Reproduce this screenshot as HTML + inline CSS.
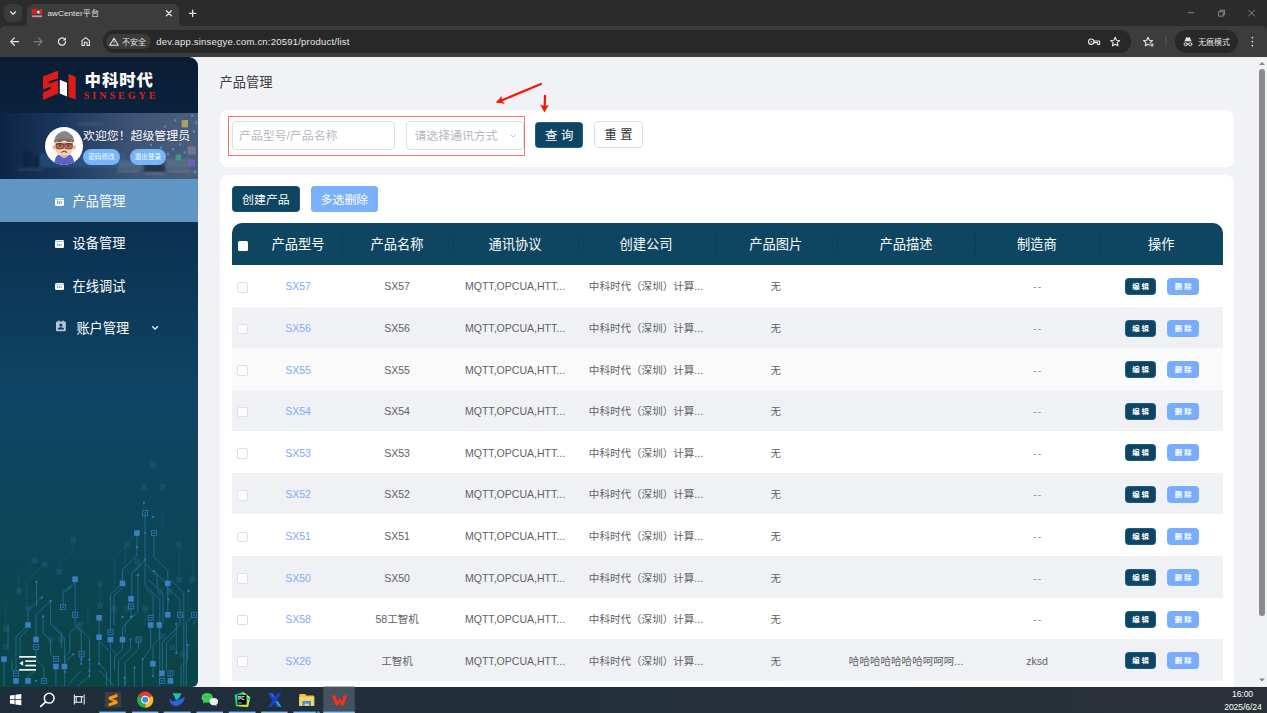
<!DOCTYPE html>
<html lang="zh-CN">
<head>
<meta charset="utf-8">
<title>awCenter平台</title>
<style>
*{box-sizing:border-box;margin:0;padding:0}
html,body{width:1267px;height:713px;overflow:hidden;background:#f0f2f5}
body{position:relative;font-family:"Liberation Sans","Noto Sans CJK SC",sans-serif;color:#333;-webkit-font-smoothing:antialiased}
.abs{position:absolute}
svg{display:block;position:absolute;overflow:visible}
/* ---------- browser chrome ---------- */
#tabstrip{left:0;top:0;width:1267px;height:36px;background:#2b2b2b}
#tabsearch{left:4px;top:4.4px;width:18px;height:17.6px;border-radius:5px;background:#3a3a3a}
#tab{left:27px;top:4px;width:152px;height:23px;background:#3c3c3c;border-radius:6px 6px 0 0}
#tabtitle{left:47.5px;top:8.4px;font-size:8.1px;line-height:12px;color:#e3e3e3;white-space:nowrap;letter-spacing:.08px}
#toolbar{left:0;top:25.9px;width:1267px;height:31px;background:#3c3c3c;border-radius:5px 5px 0 0}
#omni{left:103.4px;top:30.2px;width:1027.6px;height:22.6px;border-radius:11.3px;background:#282828}
#chip{left:106px;top:33.9px;width:44.8px;height:15.3px;border-radius:7.7px;background:#3c3c3c}
#chiptxt{left:122px;top:37.2px;font-size:8px;line-height:12px;color:#e3e3e3;white-space:nowrap}
#url{left:156.3px;top:34.8px;font-size:9.5px;line-height:14px;color:#e8e8e8;white-space:nowrap;letter-spacing:.22px}
#incog{left:1174.8px;top:30.2px;width:63px;height:22.6px;border-radius:11.3px;background:#282828}
#incogtxt{left:1198px;top:37px;font-size:8px;line-height:12px;color:#e3e3e3;white-space:nowrap}
/* ---------- sidebar ---------- */
#side{left:0;top:57px;width:198px;height:629.6px;border-radius:0 9px 6px 0;overflow:hidden;
 background:linear-gradient(180deg,#0a1c33 0px,#0b2744 90px,#0b3151 172px,#0e4566 342px,#0c4556 487px,#0a4445 628px)}
#userbg{left:0;top:54.4px;width:198px;height:66px;background:linear-gradient(90deg,#0d2544 0%,#19355a 28%,#2a4466 45%,#3f5474 68%,#4b5f7c 100%)}
#avatar{left:45px;top:68.8px;width:38.4px;height:38.4px;border-radius:50%;background:#fff;overflow:hidden}
#welcome{left:83px;top:68.4px;font-size:11.9px;line-height:18px;color:#fff;white-space:nowrap;text-shadow:0 0 2px rgba(0,0,0,.35)}
.pill{top:90.4px;width:36.5px;height:16.5px;border-radius:8.3px;background:#74b6f7;color:#fff;font-size:6.6px;line-height:16.5px;text-align:center;white-space:nowrap}
.mi{left:0;width:198px;height:42.5px;color:#fff;font-size:13.2px;line-height:42.5px;white-space:nowrap}
.mi span{position:absolute;left:72.6px;top:1.7px}
.mi.act{background:#5f96c4}
.ico1{position:absolute;left:54.9px;top:18.6px;width:9.2px;height:7.7px;border-radius:1.3px;background:#fbfcfe}
.ico1:before{content:"";position:absolute;left:0;top:1.1px;width:9.2px;height:.5px;background:rgba(20,70,130,.28)}
.ico1:after{content:"";position:absolute;left:2.4px;top:3.4px;width:.9px;height:2.2px;background:rgba(20,70,130,.55);box-shadow:1.8px 0 0 rgba(20,70,130,.55),3.6px 0 0 rgba(20,70,130,.55)}
/* ---------- main ---------- */
#title{left:219.6px;top:72.8px;font-size:13.25px;line-height:20px;color:#3b3d40;white-space:nowrap}
.card{background:#fff;border-radius:8px}
#search{left:220.3px;top:110.2px;width:1014.2px;height:56.4px}
#redbox{left:228.4px;top:115.7px;width:296.6px;height:40.2px;border:1px solid #f4736d}
.inp{top:121.2px;height:29.2px;border:1px solid #dcdfe6;border-radius:4px;background:#fff;color:#b4b8bf;font-size:11.9px;line-height:28.6px;white-space:nowrap}
.btn{white-space:nowrap;text-align:center}
#q{left:535.4px;top:121.6px;width:47.6px;height:26.2px;border-radius:3.5px;background:#0e4561;border:1px solid #1d5f9e;color:#fff;font-size:12.4px;line-height:26px}
#r{left:594px;top:121.3px;width:49px;height:26.5px;border-radius:3.5px;background:#fff;border:1px solid #dcdfe6;color:#303133;font-size:12.3px;line-height:27.6px}
#tcard{left:220.3px;top:174.9px;width:1014.2px;height:520px;border-radius:8px 8px 0 0}
#b1{left:231.8px;top:186.4px;width:68.2px;height:25.7px;border-radius:3.5px;background:#0e4561;border:1px solid #174f78;color:#fff;font-size:11.9px;line-height:27.4px}
#b2{left:310.7px;top:186.2px;width:67.4px;height:26.2px;border-radius:3.5px;background:#7bb0fb;color:#fff;font-size:11.9px;line-height:29px}
#thead{left:231.6px;top:223px;width:991.9px;height:41.7px;background:#0e4661;border-radius:10px 10px 0 0}
.th{top:224.1px;height:41.7px;line-height:41.7px;color:#fff;font-size:13.25px;text-align:center;white-space:nowrap}
.sep{top:233.6px;width:1px;height:20.8px;background:#0a3f59}
.row{left:231.6px;width:991.9px;height:41.55px}
.row.odd{background:#f0f1f5}
.row.hov{background:#fafafa}
.c{position:absolute;top:1.6px;height:41.55px;line-height:41.55px;text-align:center;font-size:10.56px;color:#606266;white-space:nowrap}
.c.lk{color:#7fabf8}
.cb{position:absolute;left:5.7px;top:17.1px;width:10.7px;height:10.7px;border:1px solid #dcdfe6;border-radius:2px;background:#fff}
.eb,.db{position:absolute;top:13.1px;width:31.6px;height:17px;border-radius:3.5px;color:#fff;font-size:7.4px;font-weight:700;line-height:15.6px;border:.8px solid #7bb0fb;text-align:center;white-space:nowrap}
.eb{left:893.2px;background:#0e4561;border-color:#1b5b93}
.db{left:935.9px;background:#79adfb;border-color:#79adfb}
/* ---------- scrollbar ---------- */
#strack{left:1257px;top:57px;width:10px;height:629.6px;background:#f1f2f4}
#sthumb{left:1259.1px;top:69px;width:5.9px;height:547px;border-radius:3px;background:#8b8b8b}
/* ---------- taskbar ---------- */
#task{left:0;top:686.6px;width:1267px;height:26.4px;background:linear-gradient(90deg,#1f2d3b 0%,#222f3b 40%,#2a3038 100%)}
.ul{top:711.4px;height:1.6px;background:#7dbdf0}
.clock{color:#fff;font-size:8.6px;line-height:10px;white-space:nowrap;text-align:right;right:5.4px;letter-spacing:-0.1px}
</style>
</head>
<body>
<!-- CHROME -->
<div id="tabstrip" class="abs"></div>
<div id="tabsearch" class="abs"></div>
<div id="tab" class="abs"></div>
<div id="tabtitle" class="abs">awCenter平台</div>
<div id="toolbar" class="abs"></div>
<div id="omni" class="abs"></div>
<div id="chip" class="abs"></div>
<div id="chiptxt" class="abs">不安全</div>
<div id="url" class="abs">dev.app.sinsegye.com.cn:20591/product/list</div>
<div id="incog" class="abs"></div>
<div id="incogtxt" class="abs">无痕模式</div>
<svg style="left:0;top:0" width="1267" height="60" viewBox="0 0 1267 60">
<path d="M20.3 26.6 Q26.5 26.6 26.5 20.4 L26.5 27 L20.3 27 Z" fill="#3c3c3c"/>
<path d="M179 20.4 Q179 26.6 185.4 26.6 L185.4 27 L179 27 Z" fill="#3c3c3c"/>
<path d="M10.6 11.8 L13.1 14.4 L15.6 11.8" stroke="#e6e6e6" fill="none" stroke-linecap="round" stroke-linejoin="round" stroke-width="1.3"/>
<g transform="translate(31.6,8.1) scale(0.325,0.22)"><path d="M0 7 L15 0 L15 8 L7 11.6 L7 13.2 L16.4 9 L16.4 23.4 L0 30 L0 21.6 L9 17.8 L9 16.4 L0 20.4 Z" fill="#e02419"/><path d="M17.4 12.4 L24.4 10.6 L24.4 26 L17.4 23.6 Z" fill="#fff"/><path d="M25.4 3.4 L33 6.4 L33 29.6 L25.4 26.6 Z" fill="#e02419"/></g>
<rect x="32.2" y="15.6" width="9.8" height="1" fill="#e9e9e9"/>
<rect x="32.2" y="17.2" width="9.8" height="0.6" fill="#c0302a"/>
<path d="M166.4 10.8 L171.4 15.8 M171.4 10.8 L166.4 15.8" stroke="#e6e6e6" fill="none" stroke-linecap="round" stroke-linejoin="round" stroke-width="1.25"/>
<path d="M189.4 13.3 L195.8 13.3 M192.6 10.1 L192.6 16.5" stroke="#e6e6e6" fill="none" stroke-linecap="round" stroke-linejoin="round" stroke-width="1.3"/>
<path d="M18.6 41.6 L10.8 41.6 M14.4 37.9 L10.7 41.6 L14.4 45.3" stroke="#e6e6e6" fill="none" stroke-linecap="round" stroke-linejoin="round" stroke-width="1.25"/>
<path d="M34.2 41.6 L42 41.6 M38.4 37.9 L42.1 41.6 L38.4 45.3" stroke="#7c7c7c" fill="none" stroke-linecap="round" stroke-linejoin="round" stroke-width="1.25"/>
<path d="M65.6 41.6 A3.6 3.6 0 1 1 64.4 38.9" stroke="#e6e6e6" fill="none" stroke-linecap="round" stroke-linejoin="round" stroke-width="1.25"/>
<path d="M65.9 37.2 L65.9 40.4 L62.7 40.4 Z" fill="#e6e6e6"/>
<path d="M82 45.5 L82 40.6 L85.7 37.6 L89.4 40.6 L89.4 45.5 L87 45.5 L87 42.2 L84.4 42.2 L84.4 45.5 Z" stroke="#e6e6e6" fill="none" stroke-linecap="round" stroke-linejoin="round" stroke-width="1.15"/>
<path d="M114 38.2 L118.3 45.3 L109.7 45.3 Z" stroke="#e6e6e6" fill="none" stroke-linecap="round" stroke-linejoin="round" stroke-width="1.05"/>
<path d="M114 40.6 L114 42.8 M114 43.9 L114 44.2" stroke="#e6e6e6" stroke-width="0.9" fill="none"/>
<circle cx="1091.2" cy="41.7" r="2.7" stroke="#e6e6e6" fill="none" stroke-linecap="round" stroke-linejoin="round" stroke-width="1.1"/>
<circle cx="1091.2" cy="41.7" r="0.8" fill="#e6e6e6"/>
<path d="M1093.9 40.9 L1099.6 40.9 L1099.6 44.4 L1097.6 44.4 L1097.6 42.6 L1093.9 42.6" stroke="#e6e6e6" fill="none" stroke-linecap="round" stroke-linejoin="round" stroke-width="1.05"/>
<path d="M1115.20 37.30 L1116.49 40.22 L1119.67 40.55 L1117.29 42.68 L1117.96 45.80 L1115.20 44.20 L1112.44 45.80 L1113.11 42.68 L1110.73 40.55 L1113.91 40.22 Z" stroke="#e6e6e6" fill="none" stroke-linecap="round" stroke-linejoin="round" stroke-width="1.1"/>
<path d="M1148.00 37.30 L1149.29 40.22 L1152.47 40.55 L1150.09 42.68 L1150.76 45.80 L1148.00 44.20 L1145.24 45.80 L1145.91 42.68 L1143.53 40.55 L1146.71 40.22 Z" stroke="#e6e6e6" fill="none" stroke-linecap="round" stroke-linejoin="round" stroke-width="1.1"/>
<rect x="1149.6" y="43.2" width="5" height="4" fill="#3c3c3c"/>
<path d="M1150.4 45 L1153.6 45 M1152 43.4 L1152 46.6" stroke="#e6e6e6" fill="none" stroke-linecap="round" stroke-linejoin="round" stroke-width="0.95"/>
<rect x="1165.6" y="36.3" width="1" height="10.4" fill="#5a5a5a"/>
<path d="M1183.6 41.2 L1192.4 41.2 L1191 40.4 L1190 37.6 Q1189.8 37 1189.2 37.2 L1188 37.7 L1186.8 37.2 Q1186.2 37 1186 37.6 L1185 40.4 Z" fill="#e6e6e6"/>
<circle cx="1185.7" cy="44.2" r="1.55" stroke="#e6e6e6" fill="none" stroke-linecap="round" stroke-linejoin="round" stroke-width="1"/>
<circle cx="1190.3" cy="44.2" r="1.55" stroke="#e6e6e6" fill="none" stroke-linecap="round" stroke-linejoin="round" stroke-width="1"/>
<path d="M1187.2 43.9 Q1188 43.3 1188.8 43.9" stroke="#e6e6e6" fill="none" stroke-linecap="round" stroke-linejoin="round" stroke-width="0.9"/>
<circle cx="1252.4" cy="37.6" r="0.85" fill="#e6e6e6"/>
<circle cx="1252.4" cy="41.6" r="0.85" fill="#e6e6e6"/>
<circle cx="1252.4" cy="45.6" r="0.85" fill="#e6e6e6"/>
<path d="M1187.8 12.7 L1194.2 12.7" stroke="#9a9a9a" stroke-width="0.8" fill="none"/>
<path d="M1218.6 11.6 L1223.2 11.6 L1223.2 16.2 L1218.6 16.2 Z M1220 11.4 L1220 10.2 L1224.6 10.2 L1224.6 14.8 L1223.4 14.8" stroke="#a5a5a5" stroke-width="0.75" fill="none" stroke-linejoin="round"/>
<path d="M1248.4 9.9 L1254.8 16.3 M1254.8 9.9 L1248.4 16.3" stroke="#a5a5a5" stroke-width="0.75" fill="none"/>
</svg>

<!-- SIDEBAR -->
<div id="side" class="abs"><div class="abs" style="left:0;top:1.2px;width:198px;height:628.1px">
<svg style="left:0;top:0" width="198" height="629" viewBox="0 0 198 629">
<rect x="150.1" y="403.7" width="5.8" height="5.8" fill="#2a6a9a" opacity="0.3"/>
<rect x="141.1" y="426.4" width="5.8" height="5.8" fill="#2a6a9a" opacity="0.3"/>
<rect x="159.6" y="426.4" width="5.8" height="5.8" fill="#2a6a9a" opacity="0.3"/>
<rect x="70.3" y="478.8" width="5.8" height="5.8" fill="#2a6a9a" opacity="0.3"/>
<rect x="124.4" y="483.6" width="5.8" height="5.8" fill="#2a6a9a" opacity="0.3"/>
<rect x="176.1" y="483.6" width="5.8" height="5.8" fill="#2a6a9a" opacity="0.3"/>
<rect x="134.3" y="500.7" width="5.8" height="5.8" fill="#2a6a9a" opacity="0.3"/>
<rect x="56.2" y="510.8" width="5.8" height="5.8" fill="#2a6a9a" opacity="0.3"/>
<rect x="97.0" y="523.1" width="5.8" height="5.8" fill="#2a6a9a" opacity="0.3"/>
<rect x="176.1" y="518.8" width="5.8" height="5.8" fill="#2a6a9a" opacity="0.3"/>
<rect x="189.4" y="518.8" width="5.8" height="5.8" fill="#2a6a9a" opacity="0.3"/>
<rect x="16.3" y="530.5" width="5.8" height="5.8" fill="#2a6a9a" opacity="0.3"/>
<rect x="25.1" y="547.6" width="5.8" height="5.8" fill="#2a6a9a" opacity="0.3"/>
<rect x="97.0" y="544.9" width="5.8" height="5.8" fill="#2a6a9a" opacity="0.3"/>
<rect x="111.1" y="547.6" width="5.8" height="5.8" fill="#2a6a9a" opacity="0.3"/>
<rect x="124.4" y="547.6" width="5.8" height="5.8" fill="#2a6a9a" opacity="0.3"/>
<rect x="156.9" y="530.8" width="5.8" height="5.8" fill="#2a6a9a" opacity="0.3"/>
<rect x="166.2" y="530.8" width="5.8" height="5.8" fill="#2a6a9a" opacity="0.3"/>
<rect x="3.0" y="567.8" width="5.8" height="5.8" fill="#2a6a9a" opacity="0.3"/>
<rect x="47.7" y="578.7" width="5.8" height="5.8" fill="#2a6a9a" opacity="0.3"/>
<rect x="57.8" y="578.7" width="5.8" height="5.8" fill="#2a6a9a" opacity="0.3"/>
<rect x="3.0" y="586.2" width="5.8" height="5.8" fill="#2a6a9a" opacity="0.3"/>
<rect x="159.6" y="575.3" width="5.8" height="5.8" fill="#2a6a9a" opacity="0.3"/>
<rect x="168.9" y="586.2" width="5.8" height="5.8" fill="#2a6a9a" opacity="0.3"/>
<rect x="179.5" y="593.4" width="5.8" height="5.8" fill="#2a6a9a" opacity="0.3"/>
<rect x="142.2" y="547.6" width="5.8" height="5.8" fill="#2a6a9a" opacity="0.3"/>
<rect x="77.0" y="564.1" width="5.8" height="5.8" fill="#2a6a9a" opacity="0.3"/>
<rect x="31.7" y="499.6" width="5.8" height="5.8" fill="#2a6a9a" opacity="0.3"/>
<rect x="41.8" y="503.6" width="5.8" height="5.8" fill="#2a6a9a" opacity="0.3"/>
<path d="M44.7 506.5 L26.6 523.0 L26.6 548.3 M34.6 502.5 L18.6 517.7 L18.6 533.4 M73.2 481.7 L73.2 492.4 L59.1 505.7 L59.1 513.7 M143.8 445.0 L143.8 455.1 M153.1 459.1 L125.2 487.1 L125.2 511.0 M162.5 452.5 L162.5 471.1 L179.0 486.5 L179.0 521.7 M179.0 486.5 L192.3 500.4 L192.3 521.7 M127.3 486.5 L114.5 499.1 L114.5 529.7 M99.9 526.0 L99.9 547.8 M87.9 548.3 L87.9 567.0 M5.9 543.0 L5.9 570.7 M19.2 533.4 L5.9 547.0 M188.5 532.9 L188.5 553.7 M114.0 550.5 L114.0 567.0 M145.1 550.5 L145.1 567.0 M50.6 581.6 L50.6 590.9 M159.8 533.7 L159.8 541.7" stroke="#1f6690" stroke-width="0.8" fill="none" opacity="0.45"/>
<path d="M145.1 455.1 L145.1 527.0 L159.8 541.7 L159.8 628.2 M136.9 475.1 L136.9 497.7 L122.5 511.6 L122.5 525.4 M153.9 475.1 L153.9 499.1 L167.8 512.4 L167.8 556.8 M122.5 525.4 L110.5 536.3 L110.5 574.2 M122.5 529.7 L114.0 537.7 L114.0 567.0 M145.1 501.7 L131.8 515.0 L131.8 540.9 M141.9 505.7 L134.5 513.2 M145.1 505.7 L157.1 517.7 L157.1 529.7 M148.6 521.7 L163.0 535.5 L163.0 564.3 M145.1 529.7 L153.1 537.7 L153.1 556.3 L150.7 559.8 M153.9 513.2 L167.8 526.5 M137.9 517.2 L137.9 553.7 L122.5 569.1 L122.5 581.6 M134.5 556.3 L125.2 565.6 L125.2 575.0 M131.0 548.3 L131.0 559.0 M167.8 529.7 L180.0 541.7 L180.0 556.8 M170.4 521.7 L183.8 535.0 L183.8 628.2 M193.9 556.8 L186.4 564.3 L186.4 628.2 M180.0 556.8 L180.0 567.0 L162.5 584.3 L162.5 615.4 M176.3 565.9 L176.3 594.9 M176.3 575.0 L166.4 585.1 L166.4 612.2 M150.7 567.0 L150.7 590.9 L142.5 601.1 L142.5 628.2 M159.3 567.0 L159.3 580.3 L153.1 586.9 L153.1 605.8 M138.5 581.6 L138.5 590.9 L125.2 604.3 L125.2 628.2 M130.5 581.6 L130.5 590.9 L118.5 602.9 L118.5 628.2 M99.1 559.8 L99.1 579.2 M99.1 579.2 L99.1 605.8 M99.1 582.9 L110.5 594.1 L110.5 628.2 M99.1 605.8 L106.5 613.6 L106.5 628.2 M99.1 612.2 L114.5 628.2 M110.5 581.6 L110.5 590.9 L117.2 597.6 M122.5 581.6 L122.5 590.9 L114.5 598.9 L114.5 612.2 M75.1 521.2 L75.1 556.8 M75.1 524.4 L63.1 533.7 L63.1 549.1 M71.9 528.4 L65.2 533.7 M75.1 556.8 L75.1 567.0 L81.2 573.6 L81.2 596.3 M78.6 569.6 L89.5 580.3 L89.5 618.1 M79.9 565.6 L69.8 575.0 L69.8 593.6 L64.7 598.9 L64.7 628.2 M41.8 539.5 L28.0 552.3 L28.0 567.0 M50.6 543.0 L36.0 556.3 L36.0 581.6 M50.6 543.0 L50.6 567.0 L64.7 580.3 L64.7 608.5 M53.3 567.0 L61.3 575.0 L61.3 590.9 M43.1 558.4 L43.1 575.0 L50.6 582.4 L50.6 596.3 L55.9 601.1 M36.5 523.8 L36.5 548.3 M28.0 567.0 L16.0 579.0 L16.0 615.4 M28.0 571.0 L20.0 579.0 L20.0 601.6 M36.0 589.1 L36.0 601.6 L43.9 609.6 L43.9 622.9 M36.0 612.2 L28.0 617.6 L28.0 622.9 M4.0 601.1 L4.0 628.2 M55.9 608.5 L55.9 628.2 M81.5 596.3 L81.5 605.8 M73.2 596.3 L64.7 604.3 M89.5 618.1 L77.2 628.2 M81.2 612.2 L69.2 625.6 M153.1 605.8 L153.1 618.1 M134.5 609.6 L134.5 628.2 M124.6 619.7 L124.6 628.2 M170.4 615.4 L170.4 622.9 M187.7 586.9 L187.7 601.6 L181.1 608.2 L181.1 628.2 M191.7 567.0 L198.4 560.3 M8.0 567.0 L8.0 590.9 M12.0 601.6 L12.0 612.2 L16.0 615.4" stroke="#2672a0" stroke-width="0.9" fill="none" opacity="0.85" stroke-linejoin="round"/>
<circle cx="136.9" cy="489.2" r="1.15" fill="#2f7ab6"/>
<circle cx="145.1" cy="501.7" r="1.15" fill="#2f7ab6"/>
<circle cx="145.1" cy="475.1" r="1.15" fill="#2f7ab6"/>
<circle cx="153.9" cy="513.2" r="1.15" fill="#2f7ab6"/>
<circle cx="137.9" cy="517.2" r="1.15" fill="#2f7ab6"/>
<circle cx="41.8" cy="539.5" r="1.15" fill="#2f7ab6"/>
<circle cx="50.6" cy="543.0" r="1.15" fill="#2f7ab6"/>
<circle cx="43.1" cy="558.4" r="1.15" fill="#2f7ab6"/>
<circle cx="36.5" cy="523.8" r="1.15" fill="#2f7ab6"/>
<circle cx="122.5" cy="559.0" r="1.15" fill="#2f7ab6"/>
<circle cx="131.0" cy="559.0" r="1.15" fill="#2f7ab6"/>
<circle cx="130.5" cy="581.6" r="1.15" fill="#2f7ab6"/>
<circle cx="176.3" cy="565.9" r="1.15" fill="#2f7ab6"/>
<circle cx="142.5" cy="601.1" r="1.15" fill="#2f7ab6"/>
<circle cx="99.1" cy="605.8" r="1.15" fill="#2f7ab6"/>
<circle cx="73.2" cy="596.3" r="1.15" fill="#2f7ab6"/>
<circle cx="81.2" cy="601.6" r="1.15" fill="#2f7ab6"/>
<circle cx="81.2" cy="605.8" r="1.15" fill="#2f7ab6"/>
<circle cx="89.5" cy="601.6" r="1.15" fill="#2f7ab6"/>
<circle cx="89.5" cy="612.8" r="1.15" fill="#2f7ab6"/>
<circle cx="89.5" cy="618.1" r="1.15" fill="#2f7ab6"/>
<circle cx="36.0" cy="622.9" r="1.15" fill="#2f7ab6"/>
<circle cx="64.7" cy="613.8" r="1.15" fill="#2f7ab6"/>
<circle cx="134.5" cy="609.6" r="1.15" fill="#2f7ab6"/>
<circle cx="124.6" cy="619.7" r="1.15" fill="#2f7ab6"/>
<circle cx="153.1" cy="618.1" r="1.15" fill="#2f7ab6"/>
<circle cx="176.3" cy="594.9" r="1.15" fill="#2f7ab6"/>
<circle cx="187.7" cy="586.9" r="1.15" fill="#2f7ab6"/>
<circle cx="168.3" cy="541.7" r="1.15" fill="#2f7ab6"/>
<circle cx="143.8" cy="445.0" r="1.15" fill="#2f7ab6"/>
<circle cx="153.1" cy="459.1" r="1.15" fill="#2f7ab6"/>
<circle cx="188.5" cy="532.9" r="1.15" fill="#2f7ab6"/>
<rect x="142.6" y="452.6" width="5" height="5" fill="#0c4455" stroke="#2f76b2" stroke-width="0.9"/>
<rect x="144.3" y="454.3" width="1.6" height="1.6" fill="#2f76b2"/>
<rect x="134.1" y="472.3" width="5.6" height="5.6" fill="#3a7fc0"/>
<rect x="151.4" y="472.6" width="5" height="5" fill="#0c4455" stroke="#2f76b2" stroke-width="0.9"/>
<rect x="153.1" y="474.3" width="1.6" height="1.6" fill="#2f76b2"/>
<rect x="119.7" y="522.6" width="5.6" height="5.6" fill="#3a7fc0"/>
<rect x="165.0" y="522.6" width="5.6" height="5.6" fill="#3a7fc0"/>
<rect x="128.2" y="538.1" width="5.6" height="5.6" fill="#3a7fc0"/>
<rect x="128.5" y="545.8" width="5" height="5" fill="#0c4455" stroke="#2f76b2" stroke-width="0.9"/>
<rect x="130.2" y="547.5" width="1.6" height="1.6" fill="#2f76b2"/>
<rect x="165.0" y="554.0" width="5.6" height="5.6" fill="#3a7fc0"/>
<rect x="177.5" y="554.3" width="5" height="5" fill="#0c4455" stroke="#2f76b2" stroke-width="0.9"/>
<rect x="179.2" y="556.0" width="1.6" height="1.6" fill="#2f76b2"/>
<rect x="191.4" y="554.3" width="5" height="5" fill="#0c4455" stroke="#2f76b2" stroke-width="0.9"/>
<rect x="193.1" y="556.0" width="1.6" height="1.6" fill="#2f76b2"/>
<rect x="96.3" y="557.0" width="5.6" height="5.6" fill="#3a7fc0"/>
<rect x="96.3" y="576.4" width="5.6" height="5.6" fill="#3a7fc0"/>
<rect x="108.0" y="571.7" width="5" height="5" fill="#0c4455" stroke="#2f76b2" stroke-width="0.9"/>
<rect x="109.7" y="573.4" width="1.6" height="1.6" fill="#2f76b2"/>
<rect x="107.7" y="578.8" width="5.6" height="5.6" fill="#3a7fc0"/>
<rect x="119.7" y="578.8" width="5.6" height="5.6" fill="#3a7fc0"/>
<rect x="136.0" y="579.1" width="5" height="5" fill="#0c4455" stroke="#2f76b2" stroke-width="0.9"/>
<rect x="137.7" y="580.8" width="1.6" height="1.6" fill="#2f76b2"/>
<rect x="148.2" y="557.3" width="5" height="5" fill="#0c4455" stroke="#2f76b2" stroke-width="0.9"/>
<rect x="149.9" y="559.0" width="1.6" height="1.6" fill="#2f76b2"/>
<rect x="147.9" y="564.2" width="5.6" height="5.6" fill="#3a7fc0"/>
<rect x="156.5" y="564.2" width="5.6" height="5.6" fill="#3a7fc0"/>
<rect x="150.1" y="603.0" width="5.6" height="5.6" fill="#3a7fc0"/>
<rect x="159.1" y="612.6" width="5.6" height="5.6" fill="#3a7fc0"/>
<rect x="167.9" y="612.9" width="5" height="5" fill="#0c4455" stroke="#2f76b2" stroke-width="0.9"/>
<rect x="169.6" y="614.6" width="1.6" height="1.6" fill="#2f76b2"/>
<rect x="159.4" y="620.4" width="5" height="5" fill="#0c4455" stroke="#2f76b2" stroke-width="0.9"/>
<rect x="161.1" y="622.1" width="1.6" height="1.6" fill="#2f76b2"/>
<rect x="167.6" y="620.1" width="5.6" height="5.6" fill="#3a7fc0"/>
<rect x="72.3" y="518.4" width="5.6" height="5.6" fill="#3a7fc0"/>
<rect x="72.6" y="554.3" width="5" height="5" fill="#0c4455" stroke="#2f76b2" stroke-width="0.9"/>
<rect x="74.3" y="556.0" width="1.6" height="1.6" fill="#2f76b2"/>
<rect x="60.6" y="546.6" width="5" height="5" fill="#0c4455" stroke="#2f76b2" stroke-width="0.9"/>
<rect x="62.3" y="548.3" width="1.6" height="1.6" fill="#2f76b2"/>
<rect x="25.2" y="564.2" width="5.6" height="5.6" fill="#3a7fc0"/>
<rect x="33.2" y="578.8" width="5.6" height="5.6" fill="#3a7fc0"/>
<rect x="33.5" y="586.6" width="5" height="5" fill="#0c4455" stroke="#2f76b2" stroke-width="0.9"/>
<rect x="35.2" y="588.3" width="1.6" height="1.6" fill="#2f76b2"/>
<rect x="79.0" y="593.8" width="5" height="5" fill="#0c4455" stroke="#2f76b2" stroke-width="0.9"/>
<rect x="80.7" y="595.5" width="1.6" height="1.6" fill="#2f76b2"/>
<rect x="1.2" y="598.3" width="5.6" height="5.6" fill="#3a7fc0"/>
<rect x="13.5" y="612.9" width="5" height="5" fill="#0c4455" stroke="#2f76b2" stroke-width="0.9"/>
<rect x="15.2" y="614.6" width="1.6" height="1.6" fill="#2f76b2"/>
<rect x="13.2" y="620.1" width="5.6" height="5.6" fill="#3a7fc0"/>
<rect x="25.2" y="620.1" width="5.6" height="5.6" fill="#3a7fc0"/>
<rect x="41.4" y="620.4" width="5" height="5" fill="#0c4455" stroke="#2f76b2" stroke-width="0.9"/>
<rect x="43.1" y="622.1" width="1.6" height="1.6" fill="#2f76b2"/>
<rect x="53.4" y="598.6" width="5" height="5" fill="#0c4455" stroke="#2f76b2" stroke-width="0.9"/>
<rect x="55.1" y="600.3" width="1.6" height="1.6" fill="#2f76b2"/>
<rect x="53.1" y="605.7" width="5.6" height="5.6" fill="#3a7fc0"/>
<rect x="61.6" y="605.7" width="5.6" height="5.6" fill="#3a7fc0"/>
</svg>
<div id="userbg" class="abs"><svg style="left:0;top:0" width="198" height="66" viewBox="0 112.6 198 66">
<defs><filter id="bl" x="-20%" y="-20%" width="140%" height="140%"><feGaussianBlur stdDeviation="1.1"/></filter></defs>
<g filter="url(#bl)">
<rect x="40" y="153" width="86" height="14" fill="#2b66a0" opacity=".42"/>
<rect x="24" y="150" width="3" height="15" fill="#0a1626" opacity=".55"/><rect x="29" y="152" width="3" height="13" fill="#0a1626" opacity=".5"/><rect x="34" y="156" width="5" height="10" fill="#0a1626" opacity=".5"/>
<rect x="18" y="168.6" width="25" height="1.2" fill="#7e8da3" opacity=".35"/><rect x="78" y="123.2" width="25" height="1.2" fill="#8f9cb0" opacity=".35"/>
<rect x="117" y="170.4" width="22" height="1.3" fill="#a9b3c2" opacity=".45"/><rect x="145" y="172.4" width="20" height="1.3" fill="#a9b3c2" opacity=".4"/><rect x="168" y="170.4" width="22" height="1.3" fill="#a9b3c2" opacity=".45"/>
<rect x="144" y="164" width="21" height="8" fill="#14222f" opacity=".65"/>
<rect x="118" y="160" width="24" height="9" fill="#6f8399" opacity=".35"/>
<rect x="166" y="158" width="24" height="10" fill="#6d8296" opacity=".4"/>
</g>
<g opacity=".8">
<rect x="181.6" y="119.6" width="6.4" height="7.4" fill="#bfb25e"/><rect x="175.6" y="154" width="5.6" height="6" fill="#3f9f8c"/><rect x="188.4" y="159" width="6.6" height="6.6" fill="#7a5fc9"/>
<rect x="187.6" y="146" width="8" height="8" fill="#77818f"/><rect x="172.6" y="128.4" width="5" height="4.4" fill="#8a6bb8" opacity=".7"/>
</g>
<g fill="#4f97d8" opacity=".75">
<rect x="191" y="114" width="2.4" height="2.4"/><rect x="195" y="121" width="2.6" height="2.6"/><rect x="174" y="118.8" width="2.4" height="2.4"/><rect x="164" y="125" width="2.2" height="2.2"/>
<rect x="192.6" y="130" width="2.4" height="2.4"/><rect x="187" y="134.6" width="2.2" height="2.2"/><rect x="168" y="139" width="2.2" height="2.2"/><rect x="160" y="146" width="2.4" height="2.4"/>
<rect x="172" y="147.6" width="2.2" height="2.2"/><rect x="179" y="143" width="2.4" height="2.4"/><rect x="166.6" y="152.4" width="2.6" height="2.6"/><rect x="183.6" y="150.8" width="2.2" height="2.2"/>
<rect x="156" y="151.6" width="2.2" height="2.2"/><rect x="150" y="143.6" width="2" height="2"/><rect x="193.6" y="170" width="2.6" height="2.6"/><rect x="176" y="134" width="2" height="2"/>
</g></svg></div>
<svg style="left:0;top:0" width="198" height="60" viewBox="0 0 198 60">
<polygon points="42.9,18.5 58.1,12.5 58.1,35.5 42.9,41.9" fill="#dc1c18"/>
<polygon points="48.9,23.3 58.3,20.4 58.3,22.2 48.9,25.7" fill="#0a1e38"/>
<polygon points="42.7,31.5 50.8,28.8 50.8,31.1 42.7,34.5" fill="#0a2039"/>
<polygon points="59.8,21.8 67.0,24.7 67.0,38.4 59.8,35.5" fill="#fff"/>
<polygon points="68.5,15.7 75.7,18.7 75.7,41.6 68.5,38.7" fill="#dc1c18"/>
</svg>
<div class="abs" style="left:84.6px;top:9.9px;font-size:16.4px;line-height:24px;font-weight:900;color:#fff;white-space:nowrap;letter-spacing:0.95px;font-family:'Liberation Sans','Noto Sans CJK SC',sans-serif">中科时代</div>
<div class="abs" style="left:83.8px;top:31.8px;font-size:10px;line-height:12px;font-weight:700;color:#d8231c;white-space:nowrap;letter-spacing:3.0px;font-family:'Liberation Serif',serif">SINSEGYE</div>
<div id="avatar" class="abs"><svg style="left:0;top:0" width="38.4" height="38.4" viewBox="0 0 38.4 38.4">
<path d="M9 38.4 Q10 29 13.4 27.6 L19.2 30.6 L25 27.6 Q28.6 29 29.6 38.4 Z" fill="#5a62c3"/>
<path d="M15.6 25 L22.8 25 L22.8 29 Q19.2 33 15.6 29 Z" fill="#eeb18c"/>
<circle cx="9.6" cy="20.4" r="2.1" fill="#f0b090"/><circle cx="28.8" cy="20.4" r="2.1" fill="#f0b090"/>
<rect x="10.3" y="9" width="17.8" height="19.2" rx="6.5" fill="#f7ceb2"/>
<path d="M9.2 15.4 Q9.3 9.4 13.4 6.6 Q19.2 1.4 25 6.6 Q29.1 9.4 29.2 15.4 Q19.2 11.4 9.2 15.4 Z" fill="#8b8684"/>
<path d="M9.2 15.6 Q19.2 11.2 29.2 15.6 L29 13 Q19.2 9 9.4 13 Z" fill="#7b7674"/>
<path d="M13.6 14.6 L16.6 14 M21.8 14 L24.8 14.6" stroke="#4a342c" stroke-width="0.9" stroke-linecap="round"/>
<rect x="11.2" y="16.6" width="7.4" height="5.2" rx="1.6" fill="#c96b52" stroke="#5b3b30" stroke-width="0.9"/>
<rect x="19.8" y="16.6" width="7.4" height="5.2" rx="1.6" fill="#c96b52" stroke="#5b3b30" stroke-width="0.9"/>
<path d="M10.4 17 L28 17" stroke="#5b3b30" stroke-width="1"/>
<circle cx="15" cy="18.8" r="0.9" fill="#3a2620"/><circle cx="23.4" cy="18.8" r="0.9" fill="#3a2620"/>
<path d="M16.6 25.2 Q19.2 22.8 21.8 25.2" stroke="#4a2a22" stroke-width="1" fill="none" stroke-linecap="round"/>
</svg></div>
<div id="welcome" class="abs">欢迎您！超级管理员</div>
<div class="abs pill" style="left:83.2px">密码修改</div>
<div class="abs pill" style="left:129.7px">退出登录</div>
<div class="abs mi act" style="top:121.2px"><i class="ico1"></i><span>产品管理</span></div>
<div class="abs mi" style="top:163.5px"><i class="ico1"></i><span>设备管理</span></div>
<div class="abs mi" style="top:205.8px"><i class="ico1"></i><span>在线调试</span></div>
<div class="abs mi" style="top:248.1px"><svg style="left:55.3px;top:14.1px" width="11.8" height="11.8" viewBox="0 0 24 24">
<path d="M4.5 3.2 L6.4 3.2 L6.4 0.8 L9 0.8 L9 3.2 L15 3.2 L15 0.8 L17.6 0.8 L17.6 3.2 L19.5 3.2 Q22 3.2 22 5.7 L22 20.5 Q22 23 19.5 23 L4.5 23 Q2 23 2 20.5 L2 5.7 Q2 3.2 4.5 3.2 Z" fill="#b9c6d8"/>
<circle cx="12" cy="10.4" r="3.3" fill="#123a5c"/>
<path d="M5.6 19.4 Q5.6 14.8 12 14.8 Q18.4 14.8 18.4 19.4 Z" fill="#123a5c"/>
</svg>
<svg style="left:152.2px;top:19.3px" width="6.2" height="4" viewBox="0 0 6.2 4"><path d="M0.7 0.7 L3.1 3.1 L5.5 0.7" stroke="#fff" stroke-width="1.3" fill="none" stroke-linecap="round" stroke-linejoin="round"/></svg><span style="left:76.4px">账户管理</span></div>
<svg style="left:0;top:0" width="198" height="629" viewBox="0 0 198 629">
<g fill="#f2f5f4"><rect x="19.2" y="598.0" width="16.8" height="1.7"/><rect x="25.3" y="602.3" width="10.7" height="1.7"/>
<rect x="25.3" y="606.7" width="10.7" height="1.7"/><rect x="19.2" y="611.0" width="16.8" height="1.7"/>
<path d="M19.3 605.3 L23.1 602.8 L23.1 607.8 Z"/></g></svg>
</div></div>

<!-- MAIN -->
<div id="title" class="abs">产品管理</div>
<div id="search" class="abs card"></div>
<div id="redbox" class="abs"></div>
<div class="abs inp" style="left:231.6px;width:163.6px;padding-left:6.4px">产品型号/产品名称</div>
<div class="abs inp" style="left:406px;width:117.6px;padding-left:7.4px">请选择通讯方式</div>
<svg style="left:510.3px;top:134px" width="6.4" height="4" viewBox="0 0 6.4 4"><path d="M0.5 0.5 L3.2 3.3 L5.9 0.5" stroke="#b8bcc4" stroke-width="0.9" fill="none"/></svg>
<div id="q" class="abs btn">查 询</div>
<div id="r" class="abs btn">重 置</div>
<svg style="left:0;top:0" width="1267" height="713" viewBox="0 0 1267 713">
<g stroke="#fb1505" stroke-width="2.2" fill="none" stroke-linecap="round">
<path d="M540.9 84 L501.6 100.4"/><path d="M545 95.8 L544.7 106.4"/></g>
<g fill="#fb1505"><path d="M495.7 102.5 L501.8 96.1 L501.7 100.4 L504.9 103.7 Z"/><path d="M544.4 112.6 L540.3 104.4 L544.6 106.3 L548.8 104.9 Z"/>
</g></svg>
<div id="tcard" class="abs card"></div>
<div id="b1" class="abs btn">创建产品</div>
<div id="b2" class="abs btn">多选删除</div>
<div id="thead" class="abs"></div>
<div class="abs" style="left:237.7px;top:240.6px;width:10.4px;height:10.4px;border-radius:1.5px;background:#fff"></div>
<div class="abs th" style="left:254.8px;width:86.6px">产品型号</div>
<div class="abs th" style="left:341.6px;width:111.0px">产品名称</div>
<div class="abs th" style="left:452.6px;width:124.9px">通讯协议</div>
<div class="abs th" style="left:577.5px;width:137.0px">创建公司</div>
<div class="abs th" style="left:714.5px;width:122.5px">产品图片</div>
<div class="abs th" style="left:837.0px;width:138.0px">产品描述</div>
<div class="abs th" style="left:975.0px;width:124.0px">制造商</div>
<div class="abs th" style="left:1099.0px;width:124.5px">操作</div>
<div class="abs sep" style="left:341.6px"></div>
<div class="abs sep" style="left:452.6px"></div>
<div class="abs sep" style="left:577.5px"></div>
<div class="abs sep" style="left:714.5px"></div>
<div class="abs sep" style="left:837.0px"></div>
<div class="abs sep" style="left:975.0px"></div>
<div class="abs sep" style="left:1099.0px"></div>
<div class="abs row" style="top:264.90px"><i class="cb"></i><div class="c lk" style="left:23.2px;width:86.6px">SX57</div><div class="c" style="left:110.0px;width:111.0px">SX57</div><div class="c" style="left:221.0px;width:124.9px">MQTT,OPCUA,HTT...</div><div class="c" style="left:345.9px;width:137.0px">中科时代（深圳）计算...</div><div class="c" style="left:482.9px;width:122.5px">无</div><div class="c" style="left:743.4px;width:124.0px"><span style="letter-spacing:1px;padding-left:1.4px;color:#8f9299">--</span></div><div class="eb">编 辑</div><div class="db">删 除</div></div>
<div class="abs row odd" style="top:306.50px"><i class="cb"></i><div class="c lk" style="left:23.2px;width:86.6px">SX56</div><div class="c" style="left:110.0px;width:111.0px">SX56</div><div class="c" style="left:221.0px;width:124.9px">MQTT,OPCUA,HTT...</div><div class="c" style="left:345.9px;width:137.0px">中科时代（深圳）计算...</div><div class="c" style="left:482.9px;width:122.5px">无</div><div class="c" style="left:743.4px;width:124.0px"><span style="letter-spacing:1px;padding-left:1.4px;color:#8f9299">--</span></div><div class="eb">编 辑</div><div class="db">删 除</div></div>
<div class="abs row hov" style="top:348.10px"><i class="cb"></i><div class="c lk" style="left:23.2px;width:86.6px">SX55</div><div class="c" style="left:110.0px;width:111.0px">SX55</div><div class="c" style="left:221.0px;width:124.9px">MQTT,OPCUA,HTT...</div><div class="c" style="left:345.9px;width:137.0px">中科时代（深圳）计算...</div><div class="c" style="left:482.9px;width:122.5px">无</div><div class="c" style="left:743.4px;width:124.0px"><span style="letter-spacing:1px;padding-left:1.4px;color:#8f9299">--</span></div><div class="eb">编 辑</div><div class="db">删 除</div></div>
<div class="abs row odd" style="top:389.70px"><i class="cb"></i><div class="c lk" style="left:23.2px;width:86.6px">SX54</div><div class="c" style="left:110.0px;width:111.0px">SX54</div><div class="c" style="left:221.0px;width:124.9px">MQTT,OPCUA,HTT...</div><div class="c" style="left:345.9px;width:137.0px">中科时代（深圳）计算...</div><div class="c" style="left:482.9px;width:122.5px">无</div><div class="c" style="left:743.4px;width:124.0px"><span style="letter-spacing:1px;padding-left:1.4px;color:#8f9299">--</span></div><div class="eb">编 辑</div><div class="db">删 除</div></div>
<div class="abs row" style="top:431.30px"><i class="cb"></i><div class="c lk" style="left:23.2px;width:86.6px">SX53</div><div class="c" style="left:110.0px;width:111.0px">SX53</div><div class="c" style="left:221.0px;width:124.9px">MQTT,OPCUA,HTT...</div><div class="c" style="left:345.9px;width:137.0px">中科时代（深圳）计算...</div><div class="c" style="left:482.9px;width:122.5px">无</div><div class="c" style="left:743.4px;width:124.0px"><span style="letter-spacing:1px;padding-left:1.4px;color:#8f9299">--</span></div><div class="eb">编 辑</div><div class="db">删 除</div></div>
<div class="abs row odd" style="top:472.90px"><i class="cb"></i><div class="c lk" style="left:23.2px;width:86.6px">SX52</div><div class="c" style="left:110.0px;width:111.0px">SX52</div><div class="c" style="left:221.0px;width:124.9px">MQTT,OPCUA,HTT...</div><div class="c" style="left:345.9px;width:137.0px">中科时代（深圳）计算...</div><div class="c" style="left:482.9px;width:122.5px">无</div><div class="c" style="left:743.4px;width:124.0px"><span style="letter-spacing:1px;padding-left:1.4px;color:#8f9299">--</span></div><div class="eb">编 辑</div><div class="db">删 除</div></div>
<div class="abs row" style="top:514.50px"><i class="cb"></i><div class="c lk" style="left:23.2px;width:86.6px">SX51</div><div class="c" style="left:110.0px;width:111.0px">SX51</div><div class="c" style="left:221.0px;width:124.9px">MQTT,OPCUA,HTT...</div><div class="c" style="left:345.9px;width:137.0px">中科时代（深圳）计算...</div><div class="c" style="left:482.9px;width:122.5px">无</div><div class="c" style="left:743.4px;width:124.0px"><span style="letter-spacing:1px;padding-left:1.4px;color:#8f9299">--</span></div><div class="eb">编 辑</div><div class="db">删 除</div></div>
<div class="abs row odd" style="top:556.10px"><i class="cb"></i><div class="c lk" style="left:23.2px;width:86.6px">SX50</div><div class="c" style="left:110.0px;width:111.0px">SX50</div><div class="c" style="left:221.0px;width:124.9px">MQTT,OPCUA,HTT...</div><div class="c" style="left:345.9px;width:137.0px">中科时代（深圳）计算...</div><div class="c" style="left:482.9px;width:122.5px">无</div><div class="c" style="left:743.4px;width:124.0px"><span style="letter-spacing:1px;padding-left:1.4px;color:#8f9299">--</span></div><div class="eb">编 辑</div><div class="db">删 除</div></div>
<div class="abs row" style="top:597.70px"><i class="cb"></i><div class="c lk" style="left:23.2px;width:86.6px">SX58</div><div class="c" style="left:110.0px;width:111.0px">58工智机</div><div class="c" style="left:221.0px;width:124.9px">MQTT,OPCUA,HTT...</div><div class="c" style="left:345.9px;width:137.0px">中科时代（深圳）计算...</div><div class="c" style="left:482.9px;width:122.5px">无</div><div class="c" style="left:743.4px;width:124.0px"><span style="letter-spacing:1px;padding-left:1.4px;color:#8f9299">--</span></div><div class="eb">编 辑</div><div class="db">删 除</div></div>
<div class="abs row odd" style="top:639.30px"><i class="cb"></i><div class="c lk" style="left:23.2px;width:86.6px">SX26</div><div class="c" style="left:110.0px;width:111.0px">工智机</div><div class="c" style="left:221.0px;width:124.9px">MQTT,OPCUA,HTT...</div><div class="c" style="left:345.9px;width:137.0px">中科时代（深圳）计算...</div><div class="c" style="left:482.9px;width:122.5px">无</div><div class="c" style="left:605.4px;width:138.0px">哈哈哈哈哈哈哈呵呵呵...</div><div class="c" style="left:743.4px;width:124.0px">zksd</div><div class="eb">编 辑</div><div class="db">删 除</div></div>

<!-- SCROLLBAR -->
<div id="strack" class="abs"></div>
<div id="sthumb" class="abs"></div>
<svg style="left:1257px;top:57px" width="10" height="630" viewBox="0 0 10 630"><path d="M2 7.9 L5 4.9 L8 7.9 Z M2 621.4 L5 624.4 L8 621.4 Z" fill="#858585"/></svg>

<!-- TASKBAR -->
<div id="task" class="abs"></div>
<svg style="left:0;top:684px" width="400" height="29" viewBox="0 684 400 29">
<rect x="323.3" y="686.6" width="31.5" height="26.4" fill="#46525d"/>
<rect x="99.4" y="711.6" width="26.3" height="1.6" fill="#86c3f0"/>
<rect x="132.1" y="711.6" width="26.3" height="1.6" fill="#86c3f0"/>
<rect x="163.6" y="711.6" width="27.1" height="1.6" fill="#86c3f0"/>
<rect x="196.5" y="711.6" width="26.5" height="1.6" fill="#86c3f0"/>
<rect x="228.8" y="711.6" width="26.8" height="1.6" fill="#86c3f0"/>
<rect x="261.1" y="711.6" width="26.5" height="1.6" fill="#86c3f0"/>
<rect x="293.4" y="711.6" width="22.4" height="1.6" fill="#86c3f0"/>
<rect x="323.3" y="711.6" width="31.5" height="1.6" fill="#86c3f0"/>
<rect x="316.6" y="711.6" width="3.4" height="1.6" fill="#5f8fb3"/>
<g fill="#fff"><path d="M9.9 695.6 L14.6 694.9 L14.6 699.2 L9.9 699.2 Z M15.4 694.8 L21.3 694 L21.3 699.2 L15.4 699.2 Z M9.9 700 L14.6 700 L14.6 704.3 L9.9 703.6 Z M15.4 700 L21.3 700 L21.3 705.2 L15.4 704.4 Z"/></g>
<circle cx="49.2" cy="698.2" r="4.9" stroke="#fff" stroke-width="1.5" fill="none"/><path d="M45.6 701.8 L40.8 706.4" stroke="#fff" stroke-width="1.7" stroke-linecap="round"/>
<g fill="none" stroke="#e8ecef" stroke-width="1.1"><rect x="76.2" y="696.6" width="5.2" height="5.6"/><path d="M74.4 694.4 L74.4 704.6 M74.4 696.6 L76.2 696.6 M74.4 702.2 L76.2 702.2 M81.4 696.6 L83.2 696.6 M81.4 702.2 L82.4 702.2"/><path d="M84.2 694.4 L84.2 696.2 M84.2 698.6 L84.2 704.6"/></g><circle cx="84.2" cy="697.4" r="0.8" fill="#e8ecef"/>
<rect x="104.8" y="692.1" width="16.2" height="15.3" rx="1.2" fill="#3f3f3f"/>
<path d="M108.6 697 L117.4 693.8 L117.4 697 L112.2 699 L117.4 700.8 L117.4 703.4 L108.6 706.4 L108.6 703.4 L113.8 701.4 L108.6 699.6 Z" fill="#ff9a0a"/>
<path d="M145.2 699.7 L138.19 695.65 A8.1 8.1 0 0 1 152.21 695.65 Z" fill="#e33b2e"/>
<path d="M145.2 699.7 L152.21 695.65 A8.1 8.1 0 0 1 145.20 707.80 Z" fill="#fbc116"/>
<path d="M145.2 699.7 L145.20 707.80 A8.1 8.1 0 0 1 138.19 695.65 Z" fill="#2da94f"/>
<circle cx="145.2" cy="699.7" r="3.9" fill="#fff"/><circle cx="145.2" cy="699.7" r="3" fill="#4285f4"/>
<path d="M169.2 698.4 Q171.6 701.6 175.6 701 Q180.6 699.6 184.9 697 Q184 704.6 176.6 705.9 Q170 706 169.2 698.4 Z" fill="#2a62e2"/>
<path d="M172.4 693.2 L181.6 693.2 Q179.4 698.8 175.8 700.4 Q174.8 696.2 172.4 693.2 Z" fill="#17c3b2"/>
<ellipse cx="207.2" cy="697.8" rx="5.6" ry="4.9" fill="#3ecb56"/><path d="M203.6 701.2 L203 703.6 L206 702.2 Z" fill="#3ecb56"/>
<ellipse cx="213.8" cy="701.6" rx="4.3" ry="3.7" fill="#ececec"/><path d="M216 704.4 L217 706 L214.4 705 Z" fill="#ececec"/>
<circle cx="205.4" cy="696.6" r="0.6" fill="#2a9c3f"/><circle cx="209" cy="696.6" r="0.6" fill="#2a9c3f"/>
<path d="M234.6 695 L243 692 L250.3 697.6 L248 707 L236 706 Z" fill="#21d789"/><path d="M243 692 L250.3 697.6 L248.6 703 L244 696 Z" fill="#fcf84a"/><path d="M236 706 L248 707 L249.4 701 L244 704 Z" fill="#dbe335"/><path d="M246.4 696.4 L250.3 698.4 L247.8 701 Z" fill="#07c3f2"/>
<rect x="237.4" y="694.8" width="9.2" height="9.9" fill="#0b0b0b"/><rect x="238.4" y="702.6" width="3.4" height="0.7" fill="#fff"/>
<text x="238.1" y="699.9" font-family="Liberation Sans, sans-serif" font-weight="700" font-size="4.6" fill="#fff">PC</text>
<path d="M267.7 693 L272.6 693 L281.8 707 L276.8 707 Z" fill="#1c43cf"/><path d="M281.4 693 L277.6 693 L273.8 698.8 L275.8 701.6 Z" fill="#1c43cf" opacity=".85"/><path d="M268 707 L271.8 707 L275.2 701.8 L273.2 699 Z" fill="#1c43cf" opacity=".85"/><path d="M275.4 701.2 L277.6 701.2 L281.2 706.6 L279 706.6 Z" fill="#19c0a8"/><path d="M270.4 693.6 L272.4 693.6 L274.6 696.8 L272.6 696.8 Z" fill="#2b6cf0"/>
<path d="M299.2 695.2 Q299.2 694 300.4 694 L305 694 L306.4 695.6 L313 695.6 Q314.2 695.6 314.2 696.8 L314.2 705.9 L299.2 705.9 Z" fill="#f6b93b"/><rect x="299.2" y="696.8" width="15" height="9.1" fill="#fad166"/><rect x="302.4" y="701" width="8.6" height="4.9" fill="#3b8fe8"/><rect x="304.6" y="703.6" width="4.2" height="2.3" fill="#fad166"/>
<path d="M331.6 695.4 L335.4 695.4 L337.8 701.6 L339.6 697.2 L341.6 701.6 L343.6 695.4 L347.4 695.4 L343.4 705.4 L341 705.4 L339.6 702 L338.2 705.4 L335.8 705.4 Z" fill="#f5321f"/>
</svg>
<div class="abs clock" style="top:689px;right:14px">16:00</div>
<div class="abs clock" style="top:701.6px">2025/6/24</div>
</body>
</html>
